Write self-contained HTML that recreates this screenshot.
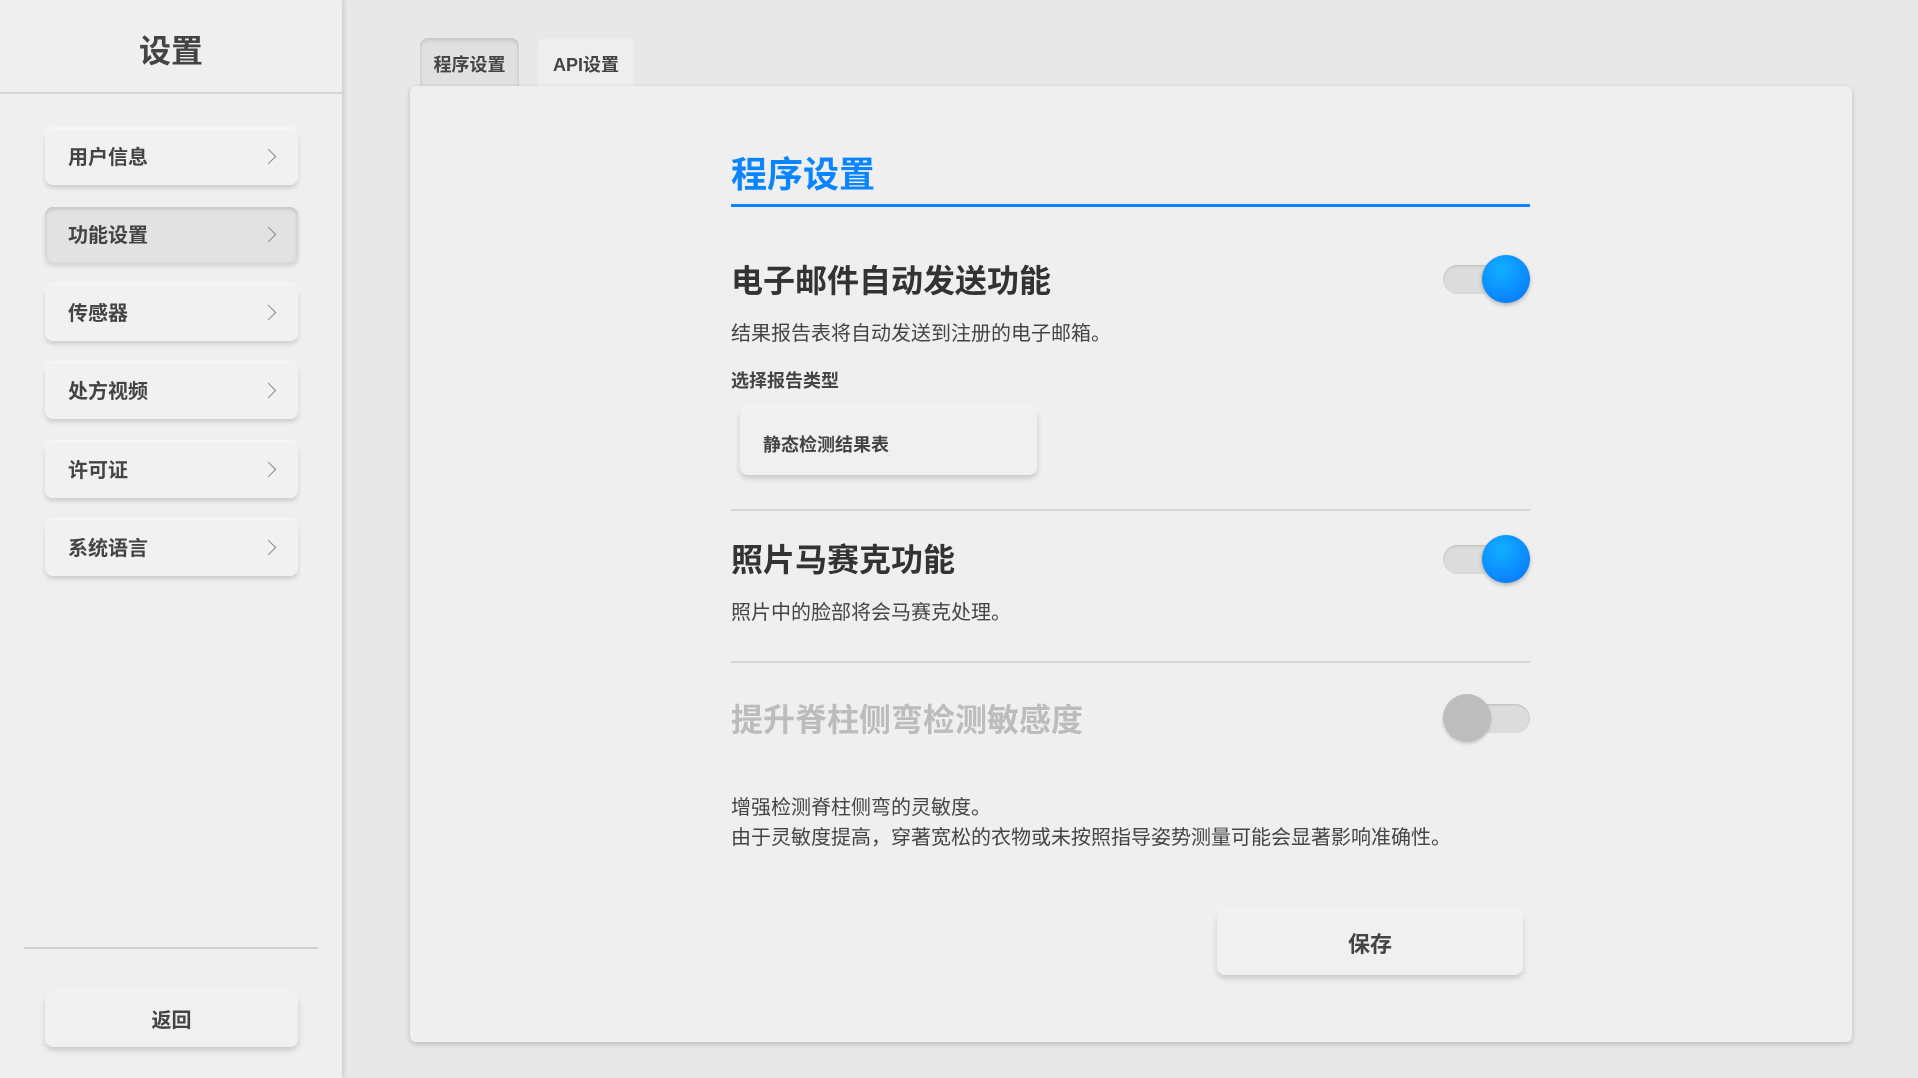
<!DOCTYPE html>
<html><head><meta charset="utf-8"><style>
*{margin:0;padding:0;box-sizing:border-box}
body{width:1918px;height:1078px;overflow:hidden;background:#e8e8e8;font-family:"Liberation Sans","Noto Sans CJK SC",sans-serif;color:#3a3a3a;position:relative}
.abs{position:absolute}
.side{left:0;top:0;width:342px;height:1078px;background:#efefef;box-shadow:2px 0 4px rgba(0,0,0,.12)}
.sh{left:0;top:0;width:342px;height:94px;border-bottom:2px solid #d6d6d6;text-align:center;line-height:102px;font-size:32px;font-weight:bold;color:#444}
.mi{left:45px;width:253px;height:56px;background:#f1f1f1;border-radius:8px;box-shadow:0 3px 5px rgba(0,0,0,.15),0 -1px 3px rgba(255,255,255,.9);font-size:20px;font-weight:bold;line-height:58px;padding-left:23px;color:#444}
.mi.act{background:#e2e2e2;box-shadow:inset 0 2px 4px rgba(0,0,0,.15),0 3px 5px rgba(0,0,0,.12)}
.chev{position:absolute;right:24px;top:22px;width:11px;height:11px;border-right:1.5px solid #888;border-top:1.5px solid #888;transform:rotate(45deg)}
.tab{top:38px;height:48px;border-radius:8px 8px 0 0;font-size:18px;font-weight:bold;text-align:center;line-height:54px;color:#444;background:#eeeeee}
.panel{left:410px;top:86px;width:1442px;height:956px;background:#efefef;border-radius:6px;box-shadow:0 2px 6px rgba(0,0,0,.2)}
.h2{font-size:32px;font-weight:bold;color:#333}
.desc{font-size:20px;color:#444}
.div{left:731px;width:799px;height:2px;background:#d4d4d4}
.trk{width:87px;height:29px;border-radius:15px;background:#dcdcdc;box-shadow:inset 0 1px 2px rgba(0,0,0,.15)}
.knob{width:48px;height:48px;border-radius:50%}
.on{background:radial-gradient(circle at 40% 30%,#11b0ff,#0a84ff 70%,#0570e0);box-shadow:0 2px 4px rgba(0,0,0,.25)}
.off{background:#bdbdbd;box-shadow:0 2px 3px rgba(0,0,0,.15)}
.btn{background:#f0f0f0;border-radius:8px;box-shadow:0 3px 6px rgba(0,0,0,.18),0 -1px 3px rgba(255,255,255,.9);font-weight:bold;text-align:center;color:#444}
</style></head><body>
<div class="abs side"></div>
<div class="abs sh">设置</div>
<div class="abs mi" style="top:129px">用户信息<span class="chev"></span></div>
<div class="abs mi act" style="top:207px">功能设置<span class="chev"></span></div>
<div class="abs mi" style="top:285px">传感器<span class="chev"></span></div>
<div class="abs mi" style="top:363px">处方视频<span class="chev"></span></div>
<div class="abs mi" style="top:442px">许可证<span class="chev"></span></div>
<div class="abs mi" style="top:520px">系统语言<span class="chev"></span></div>
<div class="abs" style="left:24px;top:947px;width:294px;height:2px;background:#cfcfcf"></div>
<div class="abs btn" style="left:45px;top:993px;width:253px;height:54px;line-height:56px;font-size:20px">返回</div>

<div class="abs tab" style="left:420px;width:99px;background:#e0e0e0;box-shadow:inset 0 2px 4px rgba(0,0,0,.15)">程序设置</div>
<div class="abs tab" style="left:538px;width:96px">API设置</div>
<div class="abs panel"></div>

<div class="abs" style="left:731px;top:151px;font-size:36px;font-weight:bold;color:#0a84ff;line-height:48px">程序设置</div>
<div class="abs" style="left:731px;top:204px;width:799px;height:3px;background:#0a84ff"></div>

<div class="abs h2" style="left:731px;top:260px;line-height:42px">电子邮件自动发送功能</div>
<div class="abs trk" style="left:1443px;top:265px"></div>
<div class="abs knob on" style="left:1482px;top:255px"></div>
<div class="abs desc" style="left:731px;top:317px">结果报告表将自动发送到注册的电子邮箱。</div>
<div class="abs" style="left:731px;top:367px;font-size:18px;font-weight:bold;color:#444">选择报告类型</div>
<div class="abs btn" style="left:740px;top:407px;width:297px;height:68px;line-height:76px;font-size:18px;text-align:left;padding-left:23px">静态检测结果表</div>
<div class="abs div" style="top:509px"></div>

<div class="abs h2" style="left:731px;top:539px;line-height:42px">照片马赛克功能</div>
<div class="abs trk" style="left:1443px;top:545px"></div>
<div class="abs knob on" style="left:1482px;top:535px"></div>
<div class="abs desc" style="left:731px;top:596px">照片中的脸部将会马赛克处理。</div>
<div class="abs div" style="top:661px"></div>

<div class="abs h2" style="left:731px;top:699px;line-height:42px;color:#bcbcbc">提升脊柱侧弯检测敏感度</div>
<div class="abs trk" style="left:1443px;top:704px"></div>
<div class="abs knob off" style="left:1443px;top:694px"></div>
<div class="abs desc" style="left:731px;top:791px">增强检测脊柱侧弯的灵敏度。</div>
<div class="abs desc" style="left:731px;top:821px">由于灵敏度提高，穿著宽松的衣物或未按照指导姿势测量可能会显著影响准确性。</div>

<div class="abs btn" style="left:1217px;top:911px;width:306px;height:64px;line-height:68px;font-size:22px">保存</div>
</body></html>
